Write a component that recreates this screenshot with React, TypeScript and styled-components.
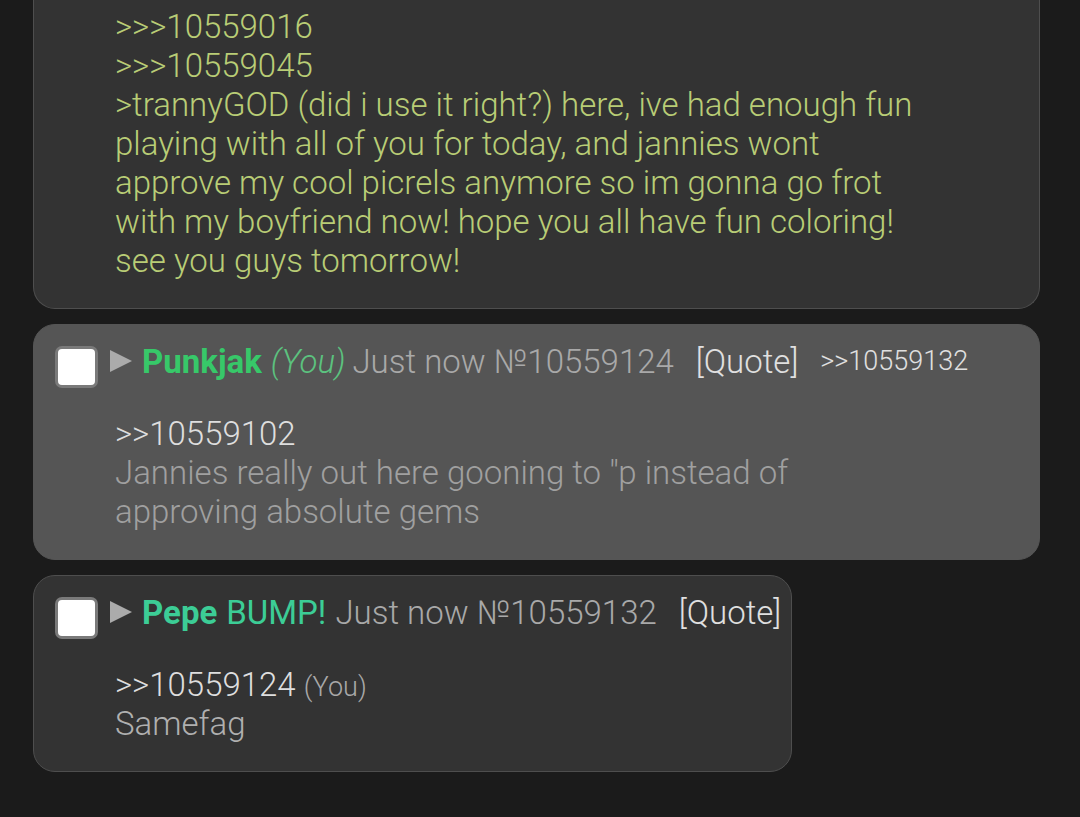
import React from "react";
import styled, { createGlobalStyle } from "styled-components";

const GlobalStyle = createGlobalStyle`
  html, body {
    margin: 0;
    padding: 0;
    background: #1b1b1b;
    font-family: Roboto, "Liberation Sans", sans-serif;
  }
`;

const Thread = styled.div`
  display: flex;
  flex-direction: column;
  align-items: flex-start;
  gap: 15px;
  padding: 0 40px 40px 33px;
`;

const Card = styled.div<{ $light?: boolean; $clipped?: boolean; $fit?: boolean }>`
  box-sizing: border-box;
  width: ${(p) => (p.$fit ? "auto" : "100%")};
  background: ${(p) => (p.$light ? "#555555" : "#333333")};
  border: 1.5px solid ${(p) => (p.$light ? "#555555" : "#4e4e4e")};
  border-top: ${(p) => (p.$clipped ? "none" : undefined)};
  border-radius: ${(p) => (p.$clipped ? "0 0 22px 22px" : "22px")};
  padding: ${(p) => (p.$clipped ? "7px 22px 28px 81px" : "9px 10px 28px 21px")};
`;

const Header = styled.div`
  display: flex;
  align-items: center;
  font-size: 33px;
  line-height: 39px;
  white-space: nowrap;
`;

const Check = styled.div`
  box-sizing: border-box;
  width: 43px;
  height: 42px;
  background: #ffffff;
  border: 3px solid #7a7a7a;
  border-radius: 7px;
  margin: 12px 12px 0 0;
`;

const Arrow = styled.div`
  width: 0;
  height: 0;
  border-top: 11px solid transparent;
  border-bottom: 11px solid transparent;
  border-left: 22px solid #ababab;
  margin-right: 10px;
`;

const Name = styled.span<{ $color: string }>`
  color: ${(p) => p.$color};
  font-weight: 700;
  margin-right: 9px;
`;

const You = styled.span`
  color: #5cc27f;
  font-style: italic;
  font-weight: 300;
  margin-right: 7px;
`;

const Bump = styled.span`
  color: #3ccd96;
  margin-right: 9px;
`;

const Meta = styled.span`
  color: #a9a9a9;
  font-weight: 300;
  margin-right: 22px;
`;

const QuoteLink = styled.span<{ $last?: boolean }>`
  color: #e0e0e0;
  font-weight: 300;
  margin-right: ${(p) => (p.$last ? "0" : "22px")};
`;

const BackLink = styled.span`
  color: #e0e0e0;
  font-size: 27px;
  font-weight: 300;
`;

const Body = styled.div<{ $pad?: boolean }>`
  font-size: 33px;
  line-height: 39px;
  font-weight: 300;
  max-width: 815px;
  padding-left: ${(p) => (p.$pad ? "60px" : "0")};
  margin-top: ${(p) => (p.$pad ? "26px" : "0")};
`;

const Line = styled.div<{ $color: string }>`
  color: ${(p) => p.$color};
`;

const Small = styled.span`
  font-size: 27px;
  line-height: 1;
  color: #a9a9a9;
`;

const GREEN = "#b9cd76";

export default function App() {
  return (
    <>
      <GlobalStyle />
      <Thread>
        <Card $clipped>
          <Body>
            <Line $color={GREEN}>&gt;&gt;&gt;10559016</Line>
            <Line $color={GREEN}>&gt;&gt;&gt;10559045</Line>
            <Line $color={GREEN}>
              &gt;trannyGOD (did i use it right?) here, ive had enough fun playing with all of you for today, and jannies wont
              approve my cool picrels anymore so im gonna go frot with my boyfriend now! hope you all have fun coloring!
              see you guys tomorrow!
            </Line>
          </Body>
        </Card>

        <Card $light>
          <Header>
            <Check />
            <Arrow />
            <Name $color="#37c869">Punkjak</Name>
            <You>(You)</You>
            <Meta>Just now №10559124</Meta>
            <QuoteLink>[Quote]</QuoteLink>
            <BackLink>&gt;&gt;10559132</BackLink>
          </Header>
          <Body $pad>
            <Line $color="#dedede">&gt;&gt;10559102</Line>
            <Line $color="#a0a0a0">
              Jannies really out here gooning to "p instead of
              <br />
              approving absolute gems
            </Line>
          </Body>
        </Card>

        <Card $fit>
          <Header>
            <Check />
            <Arrow />
            <Name $color="#3ccd96">Pepe</Name>
            <Bump>BUMP!</Bump>
            <Meta>Just now №10559132</Meta>
            <QuoteLink $last>[Quote]</QuoteLink>
          </Header>
          <Body $pad>
            <Line $color="#dedede">
              &gt;&gt;10559124 <Small>(You)</Small>
            </Line>
            <Line $color="#b0b0b0">Samefag</Line>
          </Body>
        </Card>
      </Thread>
    </>
  );
}
